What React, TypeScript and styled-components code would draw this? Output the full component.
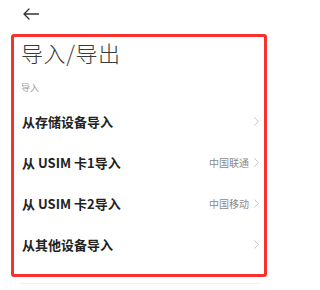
import React from "react"
import styled, { createGlobalStyle } from "styled-components"

const GlobalStyle = createGlobalStyle`
  body {
    margin: 0;
    background: #fff;
    font-family: "Noto Sans CJK SC", "Noto Sans", sans-serif;
  }
`

const rows = [
  { label: "从存储设备导入", extra: "" },
  { label: "从 USIM 卡1导入", extra: "中国联通" },
  { label: "从 USIM 卡2导入", extra: "中国移动" },
  { label: "从其他设备导入", extra: "" },
]

const BackArrow = () => (
  <svg width="16" height="12" viewBox="0 0 16 12" fill="none">
    <path d="M1 6H15.5M6 1L1 6L6 11" stroke="#333" strokeWidth="1.3" strokeLinecap="round" strokeLinejoin="round" />
  </svg>
)

const Chevron = () => (
  <svg width="5" height="9" viewBox="0 0 5 9" fill="none">
    <path d="M0.6 0.6L4.3 4.5L0.6 8.4" stroke="#c8c8c8" strokeWidth="1" strokeLinecap="round" strokeLinejoin="round" />
  </svg>
)

export default function App() {
  return (
    <S.Page>
      <GlobalStyle />
      <S.Header>
        <S.BackButton>
          <BackArrow />
        </S.BackButton>
      </S.Header>
      <S.Highlight>
        <S.Title>导入/导出</S.Title>
        <S.GroupLabel>导入</S.GroupLabel>
        <S.List>
          {rows.map((r) => (
            <S.Row key={r.label}>
              <S.RowLabel>{r.label}</S.RowLabel>
              <S.RowRight>
                {r.extra && <S.RowExtra>{r.extra}</S.RowExtra>}
                <Chevron />
              </S.RowRight>
            </S.Row>
          ))}
        </S.List>
      </S.Highlight>
      <S.Divider />
    </S.Page>
  )
}

const S = {
  Page: styled.div`
    width: 280px;
    height: 290px;
    overflow: hidden;
    background: #fff;
  `,

  Header: styled.div`
    height: 34px;
    display: flex;
    align-items: flex-start;
    padding-left: 23px;
    box-sizing: border-box;
  `,

  BackButton: styled.div`
    margin-top: 8px;
    width: 16px;
    height: 12px;
    display: flex;
  `,

  Highlight: styled.div`
    margin-left: 11px;
    width: 256px;
    height: 243px;
    box-sizing: border-box;
    border: 3px solid #f8312c;
    border-radius: 3px;
    padding: 1px 3px 0 7px;
    display: flex;
    flex-direction: column;
  `,

  Title: styled.div`
    font-size: 22px;
    line-height: 28px;
    font-weight: 300;
    color: #3a3a3a;
    letter-spacing: 0.6px;
  `,

  GroupLabel: styled.div`
    margin-top: 15px;
    font-size: 9px;
    line-height: 14px;
    color: #9a9a9a;
  `,

  List: styled.div`
    margin-top: 6px;
    display: flex;
    flex-direction: column;
  `,

  Row: styled.div`
    height: 41px;
    display: flex;
    align-items: center;
    justify-content: space-between;
  `,

  RowLabel: styled.span`
    font-size: 13px;
    font-weight: 700;
    color: #222;
    padding-left: 1px;
  `,

  RowRight: styled.div`
    display: flex;
    align-items: center;
    gap: 5px;
    padding-right: 2px;
  `,

  RowExtra: styled.span`
    font-size: 10px;
    color: #8a8a8a;
  `,

  Divider: styled.div`
    margin: 6px 20px 0;
    height: 1px;
    background: #f0f0f0;
  `,
}
